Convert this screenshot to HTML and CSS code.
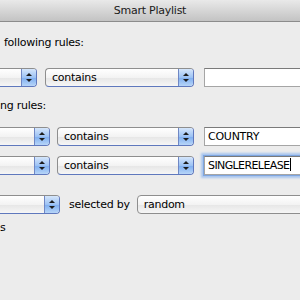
FILE: index.html
```html
<!DOCTYPE html>
<html lang="en">
<head>
    <meta charset="UTF-8">
    <title>Smart Playlist</title>
    <link rel="stylesheet" href="styles.css">
</head>
<body>
    <div class="window">
        <div class="titlebar">Smart Playlist</div>

        <div class="content">
            <div class="label first">following rules:</div>

            <div class="rule row-one">
                <div class="popup field-popup"><span class="popup-text"></span><span class="arrows"></span></div>
                <div class="popup op-popup"><span class="popup-text">contains</span><span class="arrows"></span></div>
                <div class="textfield"></div>
            </div>

            <div class="label second">ng rules:</div>

            <div class="rule row-two">
                <div class="popup field-popup"><span class="popup-text"></span><span class="arrows"></span></div>
                <div class="popup op-popup"><span class="popup-text">contains</span><span class="arrows"></span></div>
                <div class="textfield">COUNTRY</div>
            </div>

            <div class="rule row-three">
                <div class="popup field-popup"><span class="popup-text"></span><span class="arrows"></span></div>
                <div class="popup op-popup"><span class="popup-text">contains</span><span class="arrows"></span></div>
                <div class="textfield focused">SINGLERELEASE<span class="caret"></span></div>
            </div>

            <div class="rule row-four">
                <div class="popup limit-popup"><span class="popup-text"></span><span class="arrows"></span></div>
                <span class="inline-label">selected by</span>
                <div class="popup random-popup"><span class="popup-text">random</span></div>
            </div>

            <div class="label last">s</div>
        </div>
    </div>
</body>
</html>
```

FILE: styles.css
```css
body, html {
    margin: 0;
    padding: 0;
    height: 100%;
    overflow: hidden;
    background-color: #ececec;
    font-family: "DejaVu Sans", sans-serif;
    font-size: 11px;
    letter-spacing: -0.25px;
    color: #000;
}

.window {
    width: 300px;
    height: 300px;
    overflow: hidden;
}

.titlebar {
    height: 21px;
    line-height: 21px;
    text-align: center;
    color: #1a1a1a;
    background: linear-gradient(#e9e9e9, #d6d6d6 50%, #c3c3c3);
    border-bottom: 1px solid #8c8c8c;
}

.label {
    line-height: 16px;
    white-space: nowrap;
}

.label.first {
    margin-top: 13px;
    padding-left: 4px;
}

.label.second {
    margin-top: 11px;
}

.label.last {
    margin-top: 6px;
}

.rule {
    display: flex;
    align-items: center;
    height: 19px;
    white-space: nowrap;
}

.row-one { margin-top: 17px; }
.row-two { margin-top: 13px; }
.row-three { margin-top: 10px; }
.row-four { margin-top: 20px; }

/* aqua popup buttons */
.popup {
    display: flex;
    box-sizing: border-box;
    height: 19px;
    border: 1px solid #8e8e8e;
    border-radius: 4px;
    background: linear-gradient(#ffffff, #f3f3f3 50%, #e6e6e6 52%, #f6f6f6);
    overflow: hidden;
    flex-shrink: 0;
}

.popup-text {
    flex: 1;
    line-height: 17px;
    padding-left: 6px;
}

.arrows {
    position: relative;
    width: 14px;
    border-left: 1px solid #6f87c4;
    background: linear-gradient(#d5e6fb, #9cc2f4 50%, #7eaef0 52%, #b7d5f8);
}

.arrows::before,
.arrows::after {
    content: "";
    position: absolute;
    left: 4px;
    border-left: 3px solid transparent;
    border-right: 3px solid transparent;
}

.arrows::before {
    top: 4px;
    border-bottom: 3px solid #1c1c1c;
}

.arrows::after {
    bottom: 4px;
    border-top: 3px solid #1c1c1c;
}

.popup:has(.arrows) {
    border-color: #8e8e8e #5f78bd #5f78bd #8e8e8e;
}

.field-popup {
    margin-left: -30px;
    width: 67px;
}

.row-two .field-popup,
.row-three .field-popup {
    width: 80px;
}

.op-popup {
    margin-left: 8px;
    width: 149px;
}

.row-two .op-popup,
.row-three .op-popup {
    margin-left: 7px;
    width: 137px;
}

.limit-popup {
    margin-left: -30px;
    width: 90px;
}

.inline-label {
    margin-left: 9px;
    line-height: 17px;
}

.random-popup {
    margin-left: 7px;
    width: 200px;
    border-radius: 4px 0 0 4px;
}

.textfield {
    box-sizing: border-box;
    margin-left: 10px;
    width: 120px;
    height: 19px;
    line-height: 17px;
    padding-left: 3px;
    background: #fff;
    border: 1px solid #a5a5a5;
    border-top-color: #7a7a7a;
    flex-shrink: 0;
}

.textfield.focused {
    letter-spacing: -0.6px;
    box-shadow: 0 0 0 1px #7ea6e0, 0 0 2px 3px #a9c6ef;
}

.caret {
    display: inline-block;
    width: 1px;
    height: 13px;
    margin-left: 1px;
    vertical-align: -2px;
    background: #000;
}
```
